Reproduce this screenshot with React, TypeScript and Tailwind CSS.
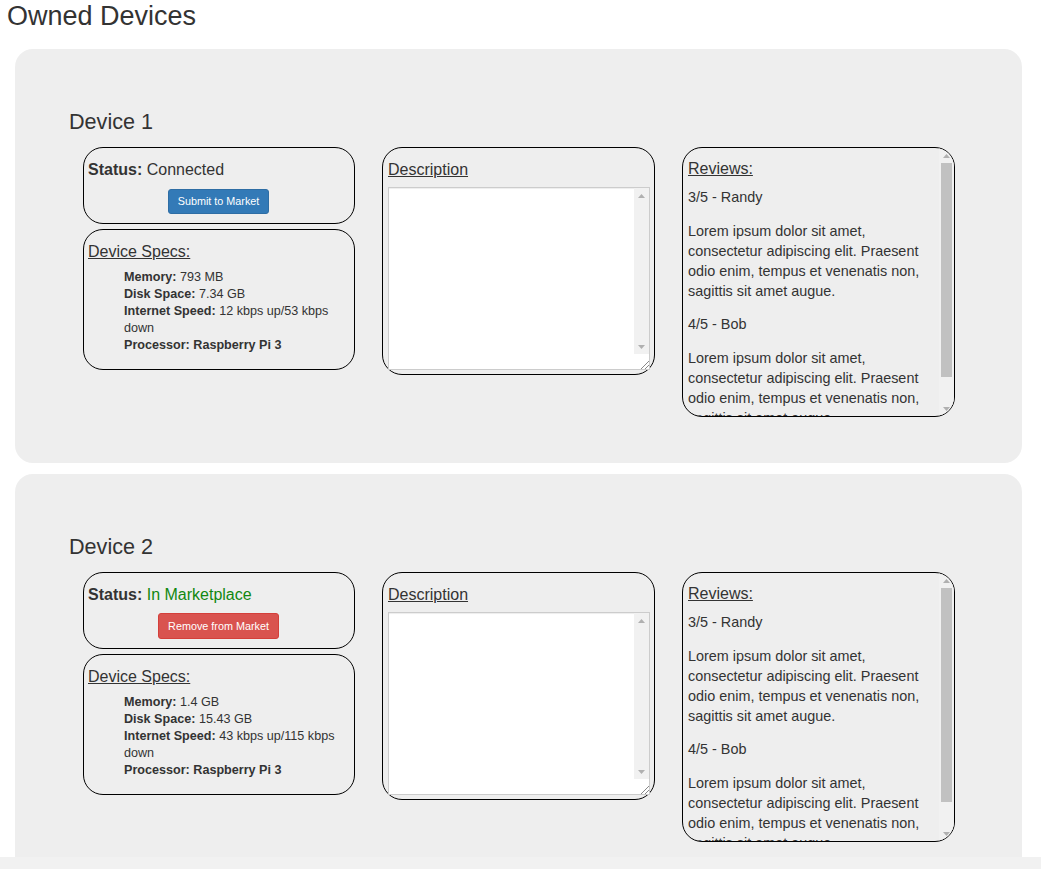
const LOREM =
  'Lorem ipsum dolor sit amet, consectetur adipiscing elit. Praesent odio enim, tempus et venenatis non, sagittis sit amet augue.';

type Device = {
  name: string;
  listed: boolean;
  memory: string;
  disk: string;
  speed: string;
};

const devices: Device[] = [
  { name: 'Device 1', listed: false, memory: '793 MB', disk: '7.34 GB', speed: '12 kbps up/53 kbps down' },
  { name: 'Device 2', listed: true, memory: '1.4 GB', disk: '15.43 GB', speed: '43 kbps up/115 kbps down' },
];

const reviews = [
  { score: '3/5', author: 'Randy' },
  { score: '4/5', author: 'Bob' },
];

export default function App() {
  return (
    <div className="flex h-[869px] flex-col overflow-hidden bg-white font-['Liberation_Sans',Arial,sans-serif] text-[#333]">
      <main className="min-h-0 flex-1 overflow-hidden">
        <h2 className="pt-px pl-[7px] text-[27px] leading-[30px] font-medium">Owned Devices</h2>
        <div className="mt-[18px] flex flex-col gap-[11px] pl-[15px]">
          {devices.map((d) => (
            <DevicePanel key={d.name} device={d} />
          ))}
        </div>
      </main>
      <div className="h-[12px] shrink-0 bg-[#f1f1f1]" />
    </div>
  );
}

function Arrow({ up }: { up?: boolean }) {
  return (
    <div className="flex h-[15px] shrink-0 items-center justify-center">
      <svg width="7" height="4" viewBox="0 0 7 4">
        <path d={up ? 'M0 4 L3.5 0 L7 4 Z' : 'M0 0 L3.5 4 L7 0 Z'} fill="#b0b0b0" />
      </svg>
    </div>
  );
}

function DevicePanel({ device }: { device: Device }) {
  return (
    <section className="w-[1007px] rounded-[18px] bg-[#eee] pt-[61px] pb-[46px]">
      <h3 className="pl-[54px] text-[21.6px] leading-[24px] font-medium">{device.name}</h3>
      <div className="mt-[13px] flex items-start gap-[27px] pl-[68px]">
        <div className="flex w-[272px] flex-col gap-[5px]">
          <div className="h-[77px] rounded-[20px] border border-black pt-[11px] pr-[5px] pl-[4px]">
            <p className="text-[16px] leading-[22px]">
              <b>Status:</b>{' '}
              {device.listed ? (
                <span className="text-[#118811]">In Marketplace</span>
              ) : (
                'Connected'
              )}
            </p>
            <div className="mt-[7px] text-center">
              {device.listed ? (
                <button
                  type="button"
                  className="h-[26px] rounded-[3px] border border-[#d43f3a] bg-[#d9534f] px-[9px] text-[10.8px] text-white"
                >
                  Remove from Market
                </button>
              ) : (
                <button
                  type="button"
                  className="h-[25px] rounded-[3px] border border-[#2e6da4] bg-[#337ab7] px-[9px] text-[10.8px] text-white"
                >
                  Submit to Market
                </button>
              )}
            </div>
          </div>
          <div className="h-[141px] rounded-[20px] border border-black pt-[11px] pr-[5px] pl-[4px]">
            <p className="text-[16px] leading-[22px] underline">Device Specs:</p>
            <ul className="mt-[6px] pl-[36px] text-[12.6px] leading-[17px]">
              <li>
                <b>Memory:</b> {device.memory}
              </li>
              <li>
                <b>Disk Space:</b> {device.disk}
              </li>
              <li>
                <b>Internet Speed:</b> {device.speed}
              </li>
              <li>
                <b>Processor: Raspberry Pi 3</b>
              </li>
            </ul>
          </div>
        </div>

        <div className="h-[228px] w-[273px] rounded-[20px] border border-black pt-[11px] pr-[4px] pb-[4px] pl-[5px]">
          <p className="text-[16px] leading-[22px] underline">Description</p>
          <div className="mt-[6px] flex h-[183px] w-[262px] border border-[#ccc] bg-white shadow-[inset_0_1px_1px_rgba(0,0,0,0.075)]">
            <textarea className="min-w-0 flex-1 resize-none bg-transparent outline-none" />
            <div className="flex w-[15px] flex-col bg-[#f1f1f1]">
              <Arrow up />
              <div className="flex-1" />
              <Arrow />
              <div className="flex h-[15px] items-end justify-end bg-white">
                <svg width="9" height="9" viewBox="0 0 9 9">
                  <path d="M9 1 L1 9 M9 5 L5 9" stroke="#888" strokeWidth="1" />
                </svg>
              </div>
            </div>
          </div>
        </div>

        <div className="flex h-[270px] w-[273px] overflow-hidden rounded-[20px] border border-black">
          <div className="min-w-0 flex-1 overflow-hidden pt-[10px] pl-[5px]">
            <p className="text-[16px] leading-[22px] underline">Reviews:</p>
            <div className="mt-[7px] text-[14.4px] leading-[20px]">
              {reviews.map((r, i) => (
                <div key={r.author} className={i === 0 ? '' : 'mt-[13px]'}>
                  <p>
                    {r.score} - {r.author}
                  </p>
                  <p className="mt-[14px]">{LOREM}</p>
                </div>
              ))}
            </div>
          </div>
          <div className="flex w-[15px] shrink-0 flex-col bg-[#f1f1f1]">
            <Arrow up />
            <div className="mx-[2px] h-[214px] bg-[#c1c1c1]" />
            <div className="flex-1" />
            <Arrow />
          </div>
        </div>
      </div>
    </section>
  );
}
